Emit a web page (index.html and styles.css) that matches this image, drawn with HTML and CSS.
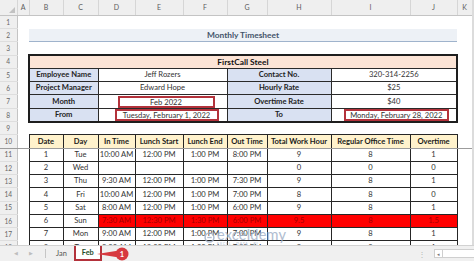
FILE: index.html
```html
<!DOCTYPE html>
<html lang="en">
<head>
  <meta charset="UTF-8">
  <meta name="viewport" content="width=device-width, initial-scale=1.0">
  <title>Monthly Timesheet</title>
  <link rel="stylesheet" href="styles.css">
</head>
<body>
  <div class="window">
    <div class="sheet">
      <table class="grid">
        <colgroup>
          <col class="w-rh"><col class="w-a"><col class="w-b"><col class="w-c"><col class="w-d"><col class="w-e">
          <col class="w-f"><col class="w-g"><col class="w-h"><col class="w-i"><col class="w-j"><col class="w-k">
        </colgroup>
        <tr class="colhead">
          <th class="corner"><span class="tri"></span></th>
          <th>A</th><th>B</th><th>C</th><th>D</th><th>E</th><th>F</th><th>G</th><th>H</th><th>I</th><th>J</th><th>K</th>
        </tr>
        <tr><th class="rh">1</th><td colspan="11"></td></tr>
        <tr><th class="rh">2</th><td></td><td colspan="9" class="title">Monthly Timesheet</td><td></td></tr>
        <tr><th class="rh">3</th><td colspan="11"></td></tr>
        <tr>
          <th class="rh">4</th><td></td>
          <td colspan="9" class="company">FirstCall Steel</td>
          <td></td>
        </tr>
        <tr>
          <th class="rh">5</th><td></td>
          <td colspan="2" class="lbl info-l">Employee Name</td>
          <td colspan="3" class="val">Jeff Rozers</td>
          <td colspan="2" class="lbl">Contact No.</td>
          <td colspan="2" class="val info-r">320-314-2256</td>
          <td></td>
        </tr>
        <tr>
          <th class="rh">6</th><td></td>
          <td colspan="2" class="lbl info-l">Project Manager</td>
          <td colspan="3" class="val">Edward Hope</td>
          <td colspan="2" class="lbl">Hourly Rate</td>
          <td colspan="2" class="val info-r">$25</td>
          <td></td>
        </tr>
        <tr>
          <th class="rh">7</th><td></td>
          <td colspan="2" class="lbl info-l">Month</td>
          <td colspan="3" class="val"><div class="mark mark-month">Feb 2022</div></td>
          <td colspan="2" class="lbl">Overtime Rate</td>
          <td colspan="2" class="val info-r">$40</td>
          <td></td>
        </tr>
        <tr>
          <th class="rh">8</th><td></td>
          <td colspan="2" class="lbl info-l info-b">From</td>
          <td colspan="3" class="val info-b"><div class="mark mark-from">Tuesday, February 1, 2022</div></td>
          <td colspan="2" class="lbl info-b">To</td>
          <td colspan="2" class="val info-r info-b"><div class="mark mark-to">Monday, February 28, 2022</div></td>
          <td></td>
        </tr>
        <tr><th class="rh">9</th><td colspan="11"></td></tr>
        <tr class="freeze">
          <th class="rh">10</th><td></td>
          <td class="ts head">Date</td><td class="ts head">Day</td><td class="ts head">In Time</td>
          <td class="ts head">Lunch Start</td><td class="ts head">Lunch End</td><td class="ts head">Out Time</td>
          <td class="ts head">Total Work Hour</td><td class="ts head">Regular Office Time</td><td class="ts head">Overtime</td>
          <td></td>
        </tr>
        <tr>
          <th class="rh">11</th><td></td>
          <td class="ts">1</td><td class="ts">Tue</td><td class="ts">10:00 AM</td><td class="ts">12:00 PM</td><td class="ts">1:00 PM</td>
          <td class="ts">8:00 PM</td><td class="ts">9</td><td class="ts">8</td><td class="ts">1</td><td></td>
        </tr>
        <tr>
          <th class="rh">12</th><td></td>
          <td class="ts">2</td><td class="ts">Wed</td><td class="ts"></td><td class="ts"></td><td class="ts"></td>
          <td class="ts"></td><td class="ts">0</td><td class="ts">0</td><td class="ts">0</td><td></td>
        </tr>
        <tr>
          <th class="rh">13</th><td></td>
          <td class="ts">3</td><td class="ts">Thu</td><td class="ts">9:30 AM</td><td class="ts">12:00 PM</td><td class="ts">1:00 PM</td>
          <td class="ts">7:30 PM</td><td class="ts">9</td><td class="ts">8</td><td class="ts">1</td><td></td>
        </tr>
        <tr>
          <th class="rh">14</th><td></td>
          <td class="ts">4</td><td class="ts">Fri</td><td class="ts">10:00 AM</td><td class="ts">12:00 PM</td><td class="ts">1:00 PM</td>
          <td class="ts">7:00 PM</td><td class="ts">8</td><td class="ts">8</td><td class="ts">0</td><td></td>
        </tr>
        <tr>
          <th class="rh">15</th><td></td>
          <td class="ts">5</td><td class="ts">Sat</td><td class="ts">8:00 AM</td><td class="ts">12:00 PM</td><td class="ts">1:00 PM</td>
          <td class="ts">6:00 PM</td><td class="ts">9</td><td class="ts">8</td><td class="ts">1</td><td></td>
        </tr>
        <tr>
          <th class="rh">16</th><td></td>
          <td class="ts">6</td><td class="ts">Sun</td><td class="ts hot">7:30 AM</td><td class="ts hot">12:30 PM</td><td class="ts hot">1:30 PM</td>
          <td class="ts hot">6:00 PM</td><td class="ts hot">9.5</td><td class="ts hot">8</td><td class="ts hot">1.5</td><td></td>
        </tr>
        <tr>
          <th class="rh">17</th><td></td>
          <td class="ts">7</td><td class="ts">Mon</td><td class="ts">9:00 AM</td><td class="ts">12:00 PM</td><td class="ts">1:00 PM</td>
          <td class="ts">7:00 PM</td><td class="ts">9</td><td class="ts">8</td><td class="ts">1</td><td></td>
        </tr>
        <tr>
          <th class="rh">18</th><td></td>
          <td class="ts">8</td><td class="ts">Tue</td><td class="ts">9:00 AM</td><td class="ts">12:00 PM</td><td class="ts">1:00 PM</td>
          <td class="ts">7:00 PM</td><td class="ts">9</td><td class="ts">8</td><td class="ts">1</td><td></td>
        </tr>
      </table>
    </div>

    <!-- watermark over the sheet -->
    <div class="watermark">
      <svg width="11" height="11" viewBox="0 0 10 10">
        <circle cx="5" cy="5" r="4" fill="none" stroke="currentColor" stroke-width="1.4"></circle>
        <path d="M3 5h4" stroke="currentColor" stroke-width="1.2"></path>
      </svg>
      <div class="wm-text">
        <span class="wm-name">exceldemy</span>
        <span class="wm-tag">EXCEL · DATA · BI</span>
      </div>
    </div>

    <div class="tabbar">
      <span class="nav">&#9664;</span>
      <span class="nav">&#9654;</span>
      <span class="sep"></span>
      <span class="tab">Jan</span>
      <span class="tab active">Feb</span>
      <svg class="callout" width="34" height="16" viewBox="0 0 34 16">
        <path d="M0 8 L22 4.5 L22 11.5 Z" fill="#d7393f"></path>
        <circle cx="25" cy="8" r="6.5" fill="#d7393f"></circle>
        <text x="25" y="10.6" text-anchor="middle" font-size="7.5" font-weight="bold" fill="#fff" font-family="Lato, sans-serif">1</text>
      </svg>
      <span class="spacer"></span>
      <span class="dots">&#8942;</span>
      <span class="hscroll"><span class="sbtn">&#9666;</span></span>
    </div>
  </div>
</body>
</html>
```

FILE: styles.css
```css
* {
  box-sizing: border-box;
  margin: 0;
  padding: 0;
}

body {
  width: 474px;
  height: 261px;
  overflow: hidden;
  background-color: #dcdcdc;
  font-family: "Lato", "Liberation Sans", sans-serif;
  color: #222;
}

.window {
  position: relative;
  width: 474px;
  height: 261px;
  display: flex;
  flex-direction: column;
}

.sheet {
  width: 472px;
  height: 245px;
  overflow: hidden;
  background-color: #fff;
}

.grid {
  table-layout: fixed;
  border-collapse: collapse;
  width: 472px;
  font-size: 7.6px;
}

.grid tr {
  height: 13.25px;
}

.grid td,
.grid th {
  padding: 0;
  line-height: 1;
  text-align: center;
  white-space: nowrap;
  overflow: hidden;
}

.w-rh { width: 17px; }
.w-a { width: 12px; }
.w-b { width: 34px; }
.w-c { width: 35px; }
.w-d { width: 37px; }
.w-e { width: 48px; }
.w-f { width: 44px; }
.w-g { width: 40px; }
.w-h { width: 64px; }
.w-i { width: 79px; }
.w-j { width: 47px; }
.w-k { width: 15px; }

/* column + row headers */
.grid tr.colhead {
  height: 15.4px;
}

.colhead th {
  background-color: #efefef;
  color: #5c5c5c;
  font-weight: normal;
  font-size: 7px;
  border-right: 1px solid #d6d6d6;
  border-bottom: 1px solid #c4c4c4;
}

.corner .tri {
  display: block;
  width: 0;
  height: 0;
  margin: 5px 2px 0 auto;
  border-left: 6px solid transparent;
  border-bottom: 6px solid #c2c2c2;
}

.rh {
  background-color: #efefef;
  color: #666;
  font-weight: normal;
  font-size: 6.6px;
  border-right: 1px solid #c4c4c4;
  border-bottom: 1px solid #dedede;
}

.freeze > th,
.freeze > td {
  border-bottom: 1px solid #9c9c9c;
}

/* title band */
.title {
  background-color: #edf1f6;
  border-bottom: 1px solid #9fb3cc;
  color: #44546a;
  font-weight: bold;
  font-size: 8.4px;
}

/* info block */
.company {
  background-color: #fce4d6;
  font-weight: bold;
  font-size: 8.4px;
  color: #111;
  border: 2px solid #1e1e1e;
  border-bottom: 1px solid #2a2a2a;
}

.lbl,
.val {
  border: 1px solid #2a2a2a;
  color: #222;
}

.lbl {
  background-color: #d9e1f2;
  font-weight: bold;
}

.val {
  background-color: #fff;
  color: #333;
}

.info-l { border-left: 2px solid #1e1e1e; }
.info-r { border-right: 2px solid #1e1e1e; }
.info-b { border-bottom: 2px solid #1e1e1e; }

.mark {
  height: 12px;
  line-height: 9px;
  border: 2px solid #b3323b;
}

.mark-month { margin: 0 12px 0 19px; }
.mark-from { margin: 0 8px 0 16px; }
.mark-to { margin: 0 7px 0 12px; }

/* timesheet */
.ts {
  border: 1px solid #262626;
  color: #333;
}

.ts.head {
  background-color: #fff2cc;
  color: #1a1a1a;
  font-weight: bold;
}

.ts.hot {
  background-color: #ff0000;
  color: #a30000;
}

/* watermark */
.watermark {
  position: absolute;
  left: 204px;
  top: 228px;
  display: flex;
  align-items: center;
  gap: 2px;
  color: #a3b2c9;
  opacity: 0.85;
}

.wm-text {
  display: flex;
  flex-direction: column;
  line-height: 1;
}

.wm-name {
  font-size: 14.5px;
  letter-spacing: 0.2px;
}

.wm-tag {
  font-size: 3.5px;
  letter-spacing: 0.8px;
}

/* sheet tabs */
.tabbar {
  position: relative;
  flex: 1;
  display: flex;
  align-items: stretch;
  background-color: #f0f0f0;
  border-top: 1px solid #d2d2d2;
  font-size: 7.4px;
  color: #555;
}

.nav {
  width: 15px;
  display: flex;
  align-items: center;
  justify-content: center;
  font-size: 4.5px;
  color: #bdbdbd;
}

.nav:first-child {
  margin-left: 8px;
}

.sep {
  width: 1px;
  margin: 3px 4px 3px 7px;
  background-color: #c6c6c6;
}

.tab {
  display: flex;
  align-items: center;
  padding: 0 6px;
}

.tab.active {
  background-color: #fff;
  color: #1f4d2c;
  font-weight: bold;
  border: 2px solid #b3323b;
  border-top: none;
  margin-left: 1px;
}

.callout {
  position: absolute;
  left: 97px;
  top: 0;
}

.spacer {
  flex: 1;
}

.dots {
  display: flex;
  align-items: center;
  color: #b5b5b5;
  font-size: 8px;
  margin-right: 8px;
}

.hscroll {
  width: 40px;
  margin: 3px 0;
  background-color: #fff;
  border: 1px solid #cfcfcf;
  border-right: none;
  display: flex;
}

.sbtn {
  width: 8px;
  border-right: 1px solid #cfcfcf;
  font-size: 5px;
  color: #777;
  display: flex;
  align-items: center;
  justify-content: center;
}
```
